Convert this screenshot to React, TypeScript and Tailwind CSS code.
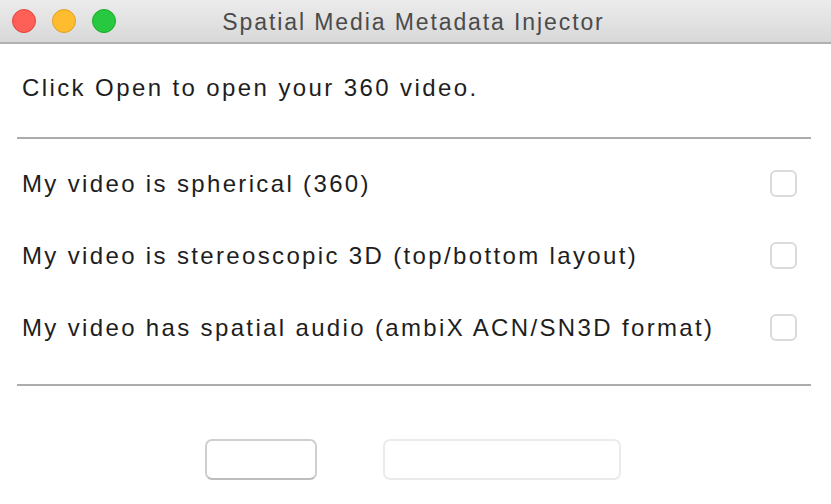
import React from 'react';

const options = [
  'My video is spherical (360)',
  'My video is stereoscopic 3D (top/bottom layout)',
  'My video has spatial audio (ambiX ACN/SN3D format)',
];

function TrafficLights() {
  return (
    <div className="flex items-center gap-[16px] pl-[12px]">
      <span className="w-[24px] h-[24px] rounded-full bg-[#fe5f57] border border-[#e0443e]" />
      <span className="w-[24px] h-[24px] rounded-full bg-[#febc2e] border border-[#dea123]" />
      <span className="w-[24px] h-[24px] rounded-full bg-[#28c840] border border-[#1aab29]" />
    </div>
  );
}

export default function App() {
  return (
    <div
      className="w-[831px] h-[504px] bg-white overflow-hidden flex flex-col"
      style={{ fontFamily: '"Liberation Sans", Arial, sans-serif' }}
    >
      {/* Title bar */}
      <div className="h-[44px] shrink-0 grid grid-cols-[1fr_auto_1fr] items-center bg-gradient-to-b from-[#ececec] to-[#d8d8d8] border-b-2 border-[#b1b1b1]">
        <TrafficLights />
        <div className="text-[23px] tracking-[1.9px] text-[#4b4b4b] leading-[28px] pr-[4px] pt-[1px]">
          Spatial Media Metadata Injector
        </div>
        <div />
      </div>

      {/* Body */}
      <div className="pl-[17px] pr-[20px] flex flex-col text-[#1e1e1e]">
        <div className="mt-[30px] pl-[5px] text-[24px] leading-[28px] tracking-[2.4px]">
          Click Open to open your 360 video.
        </div>

        <div className="mt-[35px] h-[2px] bg-[#acacac]" />

        <div className="mt-[31px] flex flex-col gap-[45px]">
          {options.map((label) => (
            <div key={label} className="h-[27px] flex items-center justify-between pl-[5px] pr-[14px]">
              <span className="text-[24px] leading-[28px] tracking-[2.35px]">{label}</span>
              <span className="w-[27px] h-[27px] rounded-[6px] border-2 border-[#dadada] bg-white" />
            </div>
          ))}
        </div>

        <div className="mt-[43px] h-[2px] bg-[#acacac]" />

        <div className="mt-[53px] flex gap-[66px] pl-[188px]">
          <button className="w-[112px] h-[41px] rounded-[7px] border-2 border-[#cfcfcf] border-b-[#bdbdbd] bg-white" />
          <button className="w-[238px] h-[41px] rounded-[7px] border-2 border-[#ebebeb] bg-white" />
        </div>
      </div>
    </div>
  );
}
